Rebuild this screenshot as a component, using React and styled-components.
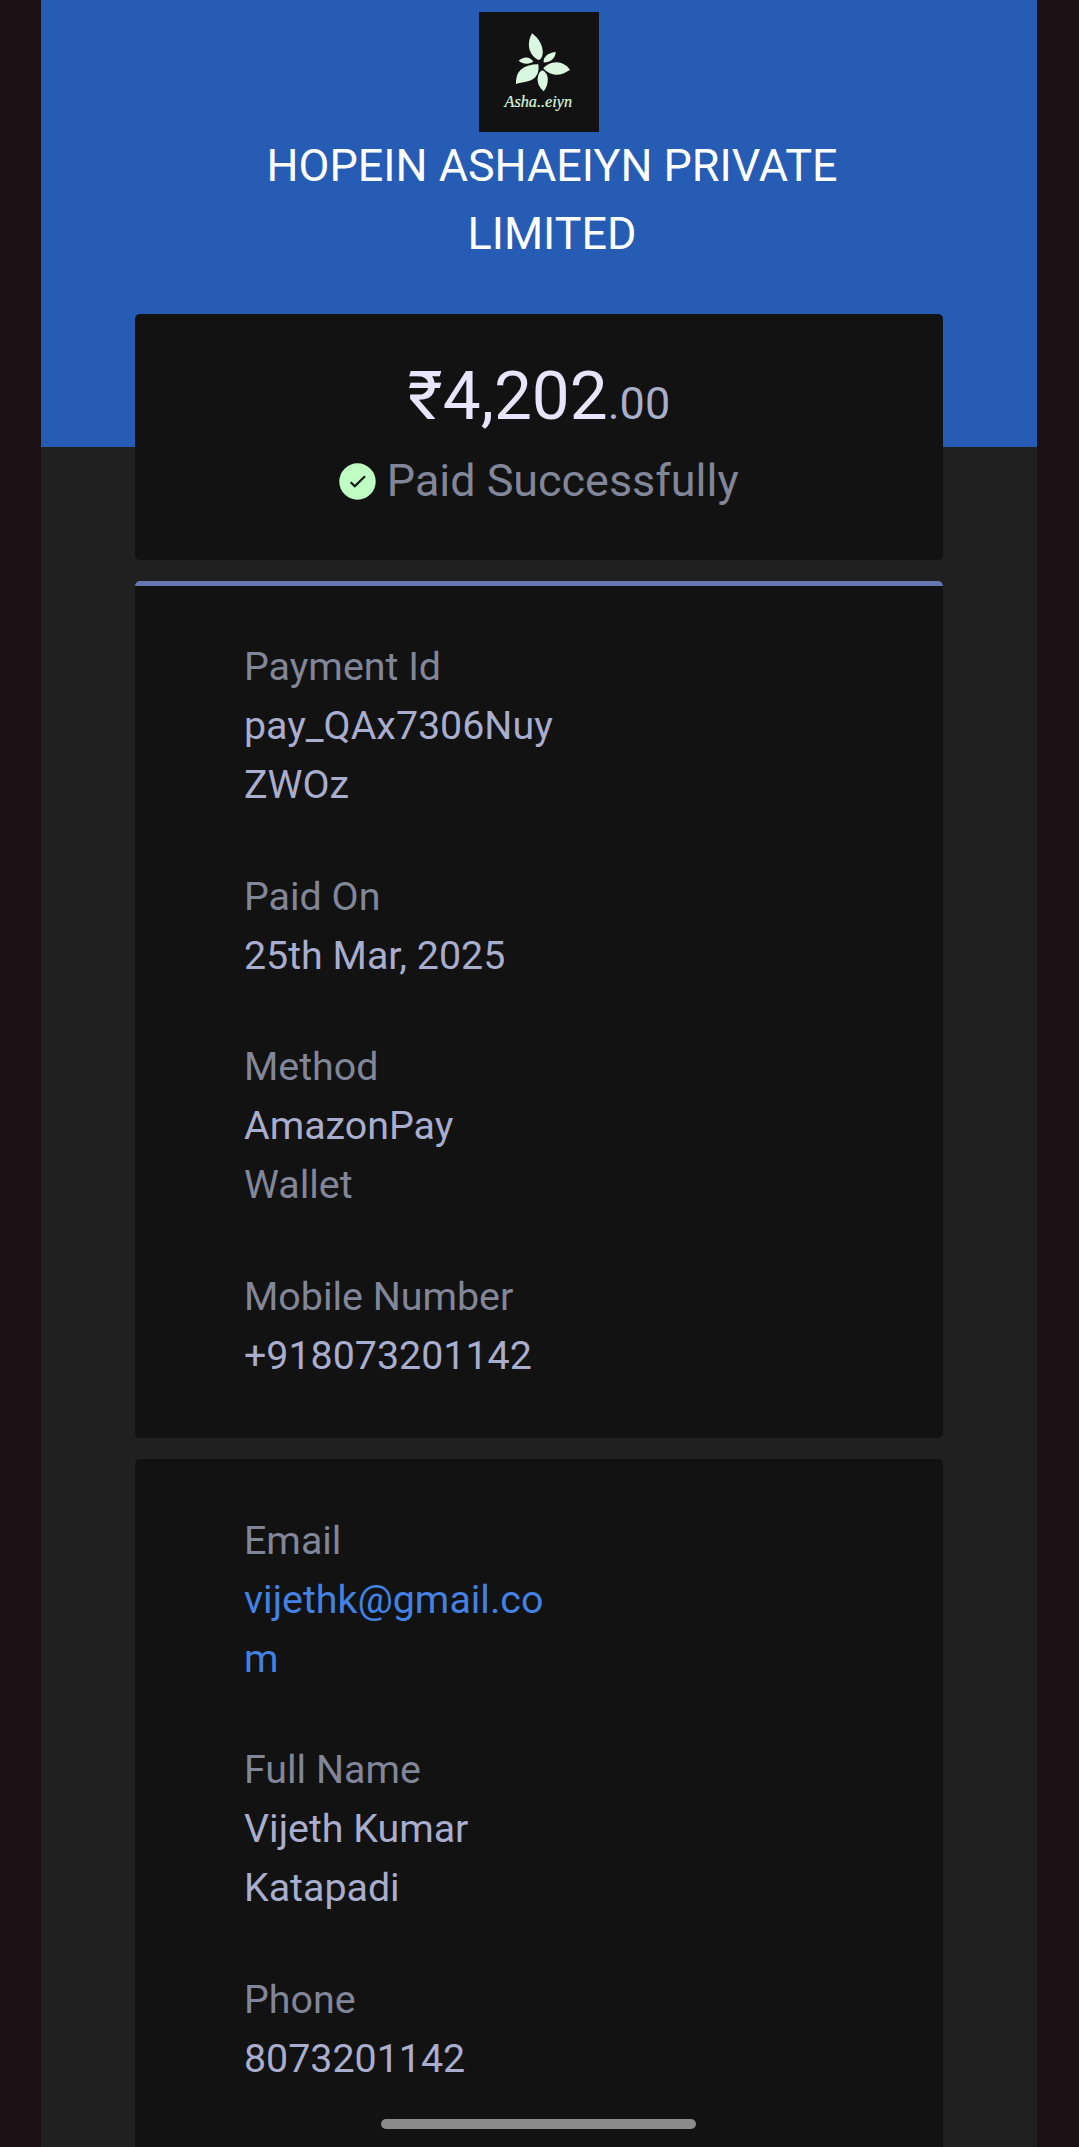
import React from 'react';
import styled, {createGlobalStyle} from 'styled-components';

const PAYMENT_DETAILS = [
  {label: 'Payment Id', value: 'pay_QAx7306NuyZWOz'},
  {label: 'Paid On', value: '25th Mar, 2025'},
  {label: 'Method', value: 'AmazonPay', note: 'Wallet'},
  {label: 'Mobile Number', value: '+918073201142'},
];

const CUSTOMER_DETAILS = [
  {label: 'Email', value: 'vijethk@gmail.com', link: true},
  {label: 'Full Name', value: 'Vijeth Kumar Katapadi'},
  {label: 'Phone', value: '8073201142'},
];

function Logo() {
  return (
    <LogoBox viewBox="0 0 120 120">
      <rect width="120" height="120" fill="#121212" />
      <g fill="#d9f8df">
        <path d="M53 21.3C58 25 63 31 63.7 39C64 43 62.500 47 60 48C56 47 51 42 50 35C49.300 30 51 25 53 21.300Z" />
        <path d="M76.700 40C76.500 45 73 50.300 64.700 50.500C64 46 67.500 41 76.700 40Z" />
        <path d="M91 57.700C86 61.500 80 63.400 75 62.500C70 61.500 66.500 59 64.300 56.200C67 53 72 50.400 77.500 50.300C83 50.500 87.500 53 91 57.700Z" />
        <path d="M64.700 79.300C60 75.500 58.200 70.500 58.700 66C59.200 62 60.700 59.500 63 58.300C66 59 68.500 62.500 68.800 67C69 71.500 67.500 76 64.700 79.300Z" />
        <path d="M37 72C37 66 38 61 42 57.500C47 53.500 54 52 59.300 52.300C60 57 59.500 62 56 65.500C51.500 70 43 70 37 72Z" />
        <path d="M39.700 48.700C43 45.200 50.500 43.500 54.300 49.500C51 52.500 43.500 52.500 39.700 48.700Z" />
      </g>
      <Wordmark x="25.500" y="94.500" textLength="67.500" lengthAdjust="spacingAndGlyphs">
        Asha..eiyn
      </Wordmark>
    </LogoBox>
  );
}

function Field({data}) {
  return (
    <FieldBox>
      <Label>{data.label}</Label>
      {data.link ? (
        <Link href={`mailto:${data.value}`}>{data.value}</Link>
      ) : (
        <Value>{data.value}</Value>
      )}
      {data.note && <Label as="dd">{data.note}</Label>}
    </FieldBox>
  );
}

export default function App() {
  return (
    <>
      <GlobalStyle />
      <Page>
        <Header>
          <Logo />
          <Merchant>HOPEIN ASHAEIYN PRIVATE LIMITED</Merchant>
        </Header>
        <Cards>
          <Summary>
            <Amount>
              ₹4,202<small>.00</small>
            </Amount>
            <Status>
              <svg width="37" height="37" viewBox="0 0 37 37">
                <circle cx="18.500" cy="18.500" r="18.200" fill="#bfffc3" />
                <path
                  d="M11.700 19.200L15.800 23.200L26 13.300"
                  fill="none"
                  stroke="#121212"
                  strokeWidth="2.200"
                />
              </svg>
              Paid Successfully
            </Status>
          </Summary>
          <Details accent>
            {PAYMENT_DETAILS.map(item => (
              <Field key={item.label} data={item} />
            ))}
          </Details>
          <Details>
            {CUSTOMER_DETAILS.map(item => (
              <Field key={item.label} data={item} />
            ))}
          </Details>
        </Cards>
      </Page>
      <HomeBar />
    </>
  );
}

const GlobalStyle = createGlobalStyle`
  * {
    box-sizing: border-box;
  }
  body {
    margin: 0;
    background-color: #1b1114;
    font-family: Roboto, sans-serif;
  }
`;

const Page = styled.main`
  width: 996px;
  height: 2147px;
  margin-left: 41px;
  overflow: hidden;
  background-color: #202020;
`;

const Header = styled.header`
  display: flex;
  flex-direction: column;
  align-items: center;
  height: 447px;
  padding-top: 12px;
  background-color: #265cb3;
`;

const LogoBox = styled.svg`
  display: block;
  flex-shrink: 0;
  width: 120px;
  height: 120px;
`;

const Wordmark = styled.text`
  fill: #d9f8df;
  stroke: #d9f8df;
  stroke-width: 0.2px;
  font-family: 'Liberation Serif', serif;
  font-size: 17px;
  font-style: italic;
`;

const Merchant = styled.h1`
  width: 650px;
  margin: 0 0 0 26px;
  color: #fff;
  font-size: 44.9px;
  font-weight: 400;
  line-height: 68px;
  text-align: center;
`;

const Cards = styled.div`
  display: flex;
  flex-direction: column;
  gap: 21px;
  width: 808px;
  margin: -133px 0 0 94px;
`;

const Card = styled.section`
  background-color: #121212;
  border-radius: 5px;
`;

const Summary = styled(Card)`
  display: flex;
  flex-direction: column;
  align-items: center;
  gap: 11px;
  height: 246px;
  padding-top: 42px;
`;

const Amount = styled.div`
  color: #e8e4fb;
  font-size: 67.5px;
  line-height: 80px;
  > small {
    color: #a9aecb;
    font-size: 45px;
    line-height: 1;
  }
`;

const Status = styled.div`
  display: flex;
  align-items: center;
  gap: 10.5px;
  color: #828699;
  font-size: 44.9px;
  line-height: 68px;
`;

const Details = styled(Card).withConfig({
  shouldForwardProp: prop => prop !== 'accent',
})`
  display: flex;
  flex-direction: column;
  gap: 52.5px;
  padding: ${props => (props.accent ? '51px 109px 52.5px' : '52px 109px')};
  border-top: ${props => (props.accent ? '5px solid #6378b0' : 'none')};
  &:last-child {
    padding-bottom: 80px;
  }
`;

const FieldBox = styled.dl`
  width: 320px;
  margin: 0;
  font-size: 39.375px;
  line-height: 59.0625px;
  word-break: break-word;
`;

const Label = styled.dt`
  margin: 0;
  color: #828699;
`;

const Value = styled.dd`
  margin: 0;
  color: #a9adce;
`;

const Link = styled.a`
  display: block;
  color: #4382e2;
  text-decoration: none;
`;

const HomeBar = styled.div`
  position: fixed;
  bottom: 18px;
  left: 381px;
  width: 315px;
  height: 10px;
  border-radius: 5px;
  background-color: #8b8b8b;
`;
